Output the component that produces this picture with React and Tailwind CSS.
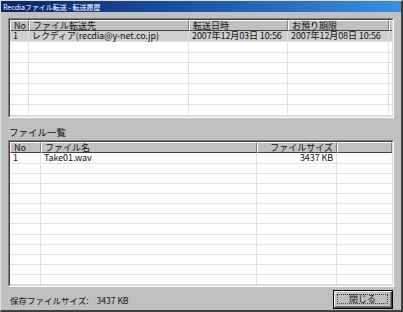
import React from "react";

const font = { fontFamily: '"Noto Sans CJK JP", "Liberation Sans", sans-serif' };

function HeaderCell({ w, children, right, grow }) {
  return (
    <div
      className={`h-[11px] bg-[#c0c0c0] border-t border-l border-t-white border-l-white border-r border-b border-r-[#808080] border-b-[#404040] flex items-center px-[3px] overflow-x-clip whitespace-nowrap ${right ? "justify-end" : ""} ${grow ? "flex-1" : "shrink-0"}`}
      style={grow ? undefined : { width: w }}
    >
      <span className="leading-[9px] text-[9px]">{children}</span>
    </div>
  );
}

function Row({ cols, cells, selected }) {
  return (
    <div className={`flex h-[11px] border-b border-[#e0e0e0] ${selected ? "bg-[#cfcfcf]" : "bg-white"}`}>
      {cols.map((c, i) => (
        <div
          key={i}
          className={`h-full border-r border-[#e0e0e0] flex items-center px-[3px] overflow-x-clip whitespace-nowrap ${c.right ? "justify-end" : ""} ${c.grow ? "flex-1 border-r-0" : "shrink-0"}`}
          style={c.grow ? undefined : { width: c.w }}
        >
          <span className="leading-[10px] text-[9px] tracking-[-0.1px]">{cells ? cells[i] : ""}</span>
        </div>
      ))}
    </div>
  );
}

function ListView({ cols, rows, count, className }) {
  const list = [];
  for (let i = 0; i < count; i++) {
    list.push(<Row key={i} cols={cols} cells={rows[i]?.cells} selected={rows[i]?.selected} />);
  }
  return (
    <div className={`border-t border-l border-t-[#808080] border-l-[#808080] border-r border-b border-r-white border-b-white ${className}`}>
      <div className="h-full border-t border-l border-t-[#404040] border-l-[#404040] border-r border-b border-r-[#dcdcdc] border-b-[#dcdcdc] bg-white overflow-hidden flex flex-col">
        <div className="flex shrink-0">
          {cols.map((c, i) => (
            <HeaderCell key={i} w={c.w} right={c.hright} grow={c.grow}>
              {c.title}
            </HeaderCell>
          ))}
        </div>
        {list}
      </div>
    </div>
  );
}

export default function App() {
  const topCols = [
    { w: 19, title: "No" },
    { w: 160, title: "ファイル転送先" },
    { w: 99, title: "転送日時" },
    { w: 101, title: "お預り期限" },
    { grow: true, title: "" },
  ];
  const botCols = [
    { w: 31, title: "No" },
    { w: 216, title: "ファイル名" },
    { w: 80, title: "ファイルサイズ", hright: true, right: true },
    { grow: true, title: "" },
  ];
  return (
    <div className="w-[403px] h-[312px] bg-[#c0c0c0] text-[#111] border-r-2 border-b-2 border-r-[#404040] border-b-[#404040] border-l border-t border-l-[#dcdcdc] border-t-[#dcdcdc] flex flex-col" style={font}>
      <div className="h-[11px] shrink-0 bg-gradient-to-r from-[#0a246a] via-[#1e56a8] to-[#3c8ee0] flex items-center px-[2px]">
        <span className="text-white text-[7px] leading-[8px]">Recdiaファイル転送 - 転送履歴</span>
      </div>
      <div className="flex-1 flex flex-col px-[7px] pt-[6px]">
        <ListView
          className="h-[100px] w-[386px]"
          cols={topCols}
          count={8}
          rows={[
            {
              selected: true,
              cells: ["1", "レクディア(recdia@y-net.co.jp)", "2007年12月03日 10:56", "2007年12月08日 10:56", ""],
            },
          ]}
        />
        <div className="text-[9.5px] leading-[10px] mt-[9px] mb-[3px] pl-[1px]">ファイル一覧</div>
        <ListView
          className="h-[147px] w-[386px]"
          cols={botCols}
          count={13}
          rows={[{ cells: ["1", "Take01.wav", "3437 KB", ""] }]}
        />
        <div className="flex items-center justify-between mt-[3px]">
          <div className="flex items-center text-[8.5px] leading-[10px] pl-[2px] pt-[1px]">
            <span>保存ファイルサイズ:</span>
            <span className="ml-[8px]">3437 KB</span>
          </div>
          <div className="w-[60px] h-[19px] border border-black mr-[1px]">
            <div className="h-full border-t border-l border-t-white border-l-white border-r border-b border-r-[#404040] border-b-[#404040]">
              <div className="h-full border-r border-b border-r-[#808080] border-b-[#808080] p-[2px]">
                <div className="h-full border border-dotted border-[#404040] flex items-center justify-center">
                  <span className="text-[9px] leading-[10px]">閉じる</span>
                </div>
              </div>
            </div>
          </div>
        </div>
      </div>
    </div>
  );
}
